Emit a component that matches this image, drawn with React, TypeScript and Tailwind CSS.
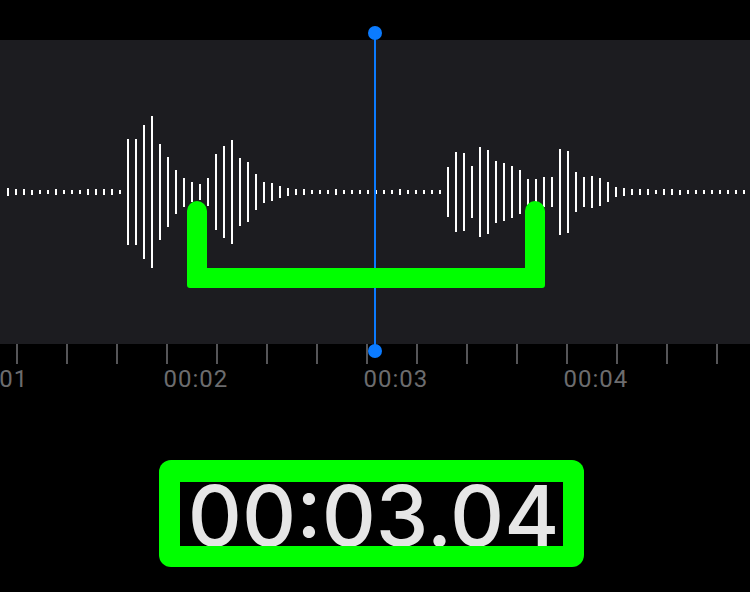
import React from "react";

const BARS = [
  8, 6, 6, 5, 4, 4, 6, 4, 4, 4, 6, 6, 6, 6, 4, 106, 106, 134, 152, 96, 70, 44, 29, 20, 16, 28, 76, 92, 104, 68,
  60, 36, 21, 18, 12, 8, 6, 6, 4, 4, 4, 6, 4, 4, 4, 4, 4, 4, 4, 6, 4, 4, 4, 4, 4, 50, 80, 78, 52, 90,
  84, 62, 58, 52, 44, 26, 26, 30, 30, 86, 82, 40, 30, 32, 28, 20, 10, 8, 6, 6, 6, 4, 6, 6, 5, 4, 4, 4, 4, 4,
  4, 4, 4,
];

const TICKS = Array.from({ length: 15 }, (_, i) => i);
const LABELS = ["00:01", "00:02", "00:03", "00:04"];

export default function App() {
  return (
    <div className="relative h-[592px] w-[750px] overflow-hidden bg-black" style={{ fontFamily: "Roboto, 'Liberation Sans', sans-serif" }}>
      <div className="h-[40px]" />
      {/* waveform */}
      <div className="flex h-[304px] items-center gap-[6px] bg-[#1c1c20] pl-[7px]">
        {BARS.map((h, i) => (
          <div key={i} className="w-[2px] shrink-0 bg-white" style={{ height: `${h}px` }} />
        ))}
      </div>
      {/* ticks */}
      <div className="flex h-[20px] gap-[48px] pl-[16px]">
        {TICKS.map((t) => (
          <div key={t} className="h-full w-[2px] shrink-0 bg-[#555558]" />
        ))}
      </div>
      {/* labels */}
      <div className="-ml-[36.5px] mt-[3px] flex">
        {LABELS.map((l) => (
          <div key={l} className="w-[200px] shrink-0 text-[24px] leading-none tracking-[1px] text-[#6c6c6e]">
            {l}
          </div>
        ))}
      </div>

      {/* big time */}
      <div className="ml-[159px] mt-[69px] h-[107px] w-[425px] rounded-[12px] bg-[#00ff00] px-[21px] pb-[21px] pt-[22px]">
        <div className="flex h-full w-full justify-center overflow-hidden bg-black pl-[4px]">
          <div
            className="-mt-[8px] whitespace-nowrap text-[84px] font-medium leading-none tracking-[0px] text-[#e6e6e6]"
            style={{ fontFamily: "Inter, Roboto, sans-serif" }}
          >
            00:03.04
          </div>
        </div>
      </div>

      {/* playhead */}
      <div className="absolute left-[374px] top-[33px] h-[318px] w-[2px] bg-[#0b7bff]" />
      <div className="absolute left-[368px] top-[26px] h-[14px] w-[14px] rounded-full bg-[#0b7bff]" />
      <div className="absolute left-[368px] top-[344px] h-[14px] w-[14px] rounded-full bg-[#0b7bff]" />

      {/* green bracket highlight */}
      <svg className="absolute left-0 top-0" width="750" height="344" viewBox="0 0 750 344">
        <path
          d="M187 211 A10 10 0 0 1 207 211 L207 268 L525 268 L525 211 A10 10 0 0 1 545 211 L545 285 Q545 288 542 288 L190 288 Q187 288 187 285 Z"
          fill="#00ff00"
        />
      </svg>
    </div>
  );
}
